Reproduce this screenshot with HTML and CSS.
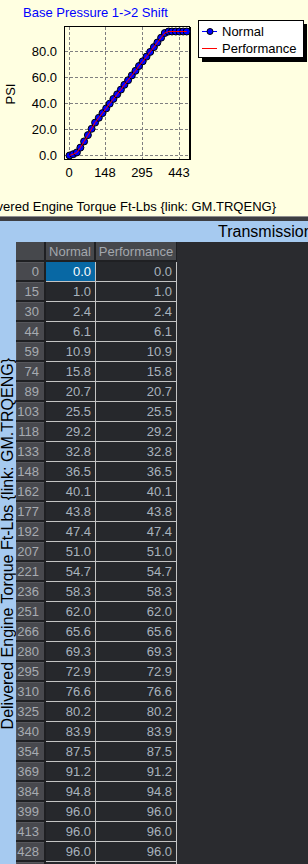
FILE: index.html
```html
<!DOCTYPE html>
<html lang="en">
<head>
    <meta charset="UTF-8">
    <title>Base Pressure 1->2 Shift</title>
    <link rel="stylesheet" href="styles.css">
</head>
<body>
    <div class="chart">
        <svg id="chart" width="308" height="216" viewBox="0 0 308 216">
            <text class="chart-title" x="23" y="17">Base Pressure 1-&gt;2 Shift</text>
            <g class="grid-lines">
                <line x1="65" y1="51.5" x2="189" y2="51.5"/>
                <line x1="65" y1="77.5" x2="189" y2="77.5"/>
                <line x1="65" y1="103.5" x2="189" y2="103.5"/>
                <line x1="65" y1="129.5" x2="189" y2="129.5"/>
                <line x1="65" y1="155.5" x2="189" y2="155.5"/>
                <line x1="69.5" y1="27" x2="69.5" y2="159"/>
                <line x1="105.5" y1="27" x2="105.5" y2="159"/>
                <line x1="142.5" y1="27" x2="142.5" y2="159"/>
                <line x1="179.5" y1="27" x2="179.5" y2="159"/>
            </g>
            <rect class="frame" x="64.5" y="26.5" width="125" height="133"/>
            <line class="frame-edge" x1="65" y1="159.5" x2="191" y2="159.5"/>
            <line class="frame-edge" x1="190.5" y1="27" x2="190.5" y2="160"/>
            <g class="axis-y">
                <text x="57" y="56.3">80.0</text>
                <text x="57" y="82.1">60.0</text>
                <text x="57" y="108">40.0</text>
                <text x="57" y="133.9">20.0</text>
                <text x="57" y="159.6">0.0</text>
            </g>
            <g class="axis-x">
                <text x="69" y="177">0</text>
                <text x="105" y="177">148</text>
                <text x="142" y="177">295</text>
                <text x="179" y="177">443</text>
            </g>
            <text class="axis-name" x="15" y="94" transform="rotate(-90 15 94)">PSI</text>
            <text class="axis-title" x="276" y="210.5">Delivered Engine Torque Ft-Lbs {link: GM.TRQENG}</text>
            <g id="series"></g>

            <rect class="legend-shadow" x="202" y="24" width="105" height="38"/>
            <rect class="legend-box" x="198.5" y="20.5" width="105" height="37"/>
            <line class="line-normal" x1="202" y1="31.5" x2="217" y2="31.5"/>
            <circle class="dot" cx="210" cy="31.5" r="3"/>
            <line class="line-perf" x1="202" y1="48.5" x2="217" y2="48.5"/>
            <text class="legend-text" x="222" y="36">Normal</text>
            <text class="legend-text" x="222" y="52.5">Performance</text>
        </svg>
    </div>
    <div class="divider"></div>

    <div class="panel">
        <div class="panel-head">Transmission</div>
        <div class="panel-body">
            <div class="side-label"><span>Delivered Engine Torque Ft-Lbs {link: GM.TRQENG}</span></div>
            <table class="grid">
                <thead>
                    <tr>
                        <th class="corner"></th>
                        <th class="col">Normal</th>
                        <th class="col col-wide">Performance</th>
                    </tr>
                </thead>
                <tbody id="rows"></tbody>
            </table>
            <div class="filler"></div>
        </div>
    </div>

    <script>
        const torque = [0, 15, 30, 44, 59, 74, 89, 103, 118, 133, 148, 162, 177, 192, 207, 221, 236,
            251, 266, 280, 295, 310, 325, 340, 354, 369, 384, 399, 413, 428, 443, 458, 472];
        const psi = [0, 1, 2.4, 6.1, 10.9, 15.8, 20.7, 25.5, 29.2, 32.8, 36.5, 40.1, 43.8, 47.4, 51,
            54.7, 58.3, 62, 65.6, 69.3, 72.9, 76.6, 80.2, 83.9, 87.5, 91.2, 94.8, 96, 96, 96, 96, 96, 96];

        // table rows
        const tbody = document.getElementById('rows');
        torque.forEach(function (t, i) {
            const tr = document.createElement('tr');
            const v = psi[i].toFixed(1);
            tr.innerHTML = '<th class="rh">' + t + '</th>' +
                '<td' + (i === 0 ? ' class="sel"' : '') + '>' + v + '</td>' +
                '<td>' + v + '</td>';
            tbody.appendChild(tr);
        });

        // chart series
        const ns = 'http://www.w3.org/2000/svg';
        const series = document.getElementById('series');
        const pts = torque.map(function (t, i) {
            return (69.5 + t * 0.2483).toFixed(1) + ',' + (155.5 - psi[i] * 1.2917).toFixed(1);
        }).join(' ');

        const blue = document.createElementNS(ns, 'polyline');
        blue.setAttribute('points', pts);
        blue.setAttribute('class', 'line-normal');
        series.appendChild(blue);

        pts.split(' ').forEach(function (p) {
            const xy = p.split(',');
            const c = document.createElementNS(ns, 'circle');
            c.setAttribute('cx', xy[0]);
            c.setAttribute('cy', xy[1]);
            c.setAttribute('r', 3.5);
            c.setAttribute('class', 'dot');
            series.appendChild(c);
        });

        const red = document.createElementNS(ns, 'polyline');
        red.setAttribute('points', pts);
        red.setAttribute('class', 'line-perf');
        series.appendChild(red);
    </script>
</body>
</html>
```

FILE: styles.css
```css
body {
    margin: 0;
    width: 308px;
    height: 864px;
    overflow: hidden;
    font-family: "Liberation Sans", Arial, sans-serif;
    background: #2a2b2f;
}
.chart {
    height: 216px;
    background: #ffffe1;
}
.chart svg {
    display: block;
}
.chart text {
    font-family: "Liberation Sans", Arial, sans-serif;
    font-size: 13px;
    fill: #000;
}
.chart .chart-title {
    fill: #0000ff;
}
.grid-lines line {
    stroke: #808080;
    stroke-width: 1;
    stroke-dasharray: 3 2;
}
.frame {
    fill: none;
    stroke: #000;
}
.frame-edge {
    stroke: #000;
}
.axis-y text {
    text-anchor: end;
}
.axis-x text {
    text-anchor: middle;
}
.chart .axis-name {
    text-anchor: middle;
}
.chart .axis-title {
    text-anchor: end;
}
.line-normal {
    fill: none;
    stroke: #0000ff;
    stroke-width: 1;
}
.line-perf {
    fill: none;
    stroke: #ff0000;
    stroke-width: 1;
}
.dot {
    fill: #0000ff;
    stroke: #000;
    stroke-width: 1;
}
.legend-shadow {
    fill: #000;
}
.legend-box {
    fill: #fff;
    stroke: #000;
}
.divider {
    height: 4px;
    background: #3d3e42;
    border-top: 1px solid #8f8f8f;
}
.panel {
    background: #a6caf0;
}
.panel-head {
    height: 21px;
    line-height: 22px;
    font-size: 16px;
    color: #000;
    padding-left: 218px;
    white-space: nowrap;
    overflow: hidden;
}
.panel-body {
    display: flex;
    height: 622px;
    overflow: hidden;
}
.side-label {
    width: 16px;
    flex: none;
    overflow: hidden;
}
.side-label span {
    display: block;
    writing-mode: vertical-rl;
    transform: rotate(180deg);
    white-space: nowrap;
    font-size: 16px;
    line-height: 16px;
    color: #000;
    margin-top: 116px;
}
.grid {
    border-collapse: separate;
    border-spacing: 0;
    table-layout: fixed;
    width: 161px;
    font-size: 13px;
    background: #1f2023;
    align-self: flex-start;
    flex: none;
}
.grid th,
.grid td {
    height: 20px;
    padding: 0;
    box-sizing: border-box;
    white-space: nowrap;
    overflow: hidden;
}
.grid thead th {
    background: #46484c;
    color: #a3a7ad;
    font-weight: normal;
    text-align: center;
    border-right: 2px solid #1f2023;
    border-bottom: 2px solid #1f2023;
}
.grid .corner {
    width: 30px;
}
.grid .col {
    width: 50px;
}
.grid .col-wide {
    width: 81px;
    border-right-width: 1px;
}
.grid .rh {
    background: #48494e;
    color: #a7abb1;
    font-weight: normal;
    text-align: right;
    padding-right: 5px;
    border-right: 2px solid #1f2023;
    border-bottom: 2px solid #1f2023;
    box-shadow: inset 1px 1px 0 #56575c;
}
.grid td {
    background: #26282c;
    color: #a9b3bd;
    text-align: right;
    padding-right: 4px;
    border-right: 1px solid #c4c4c4;
    border-bottom: 1px solid #c4c4c4;
}
.grid td.sel {
    background: #0868a4;
    color: #fff;
}
.filler {
    flex: 1;
    background: #2a2b2f;
}
```
